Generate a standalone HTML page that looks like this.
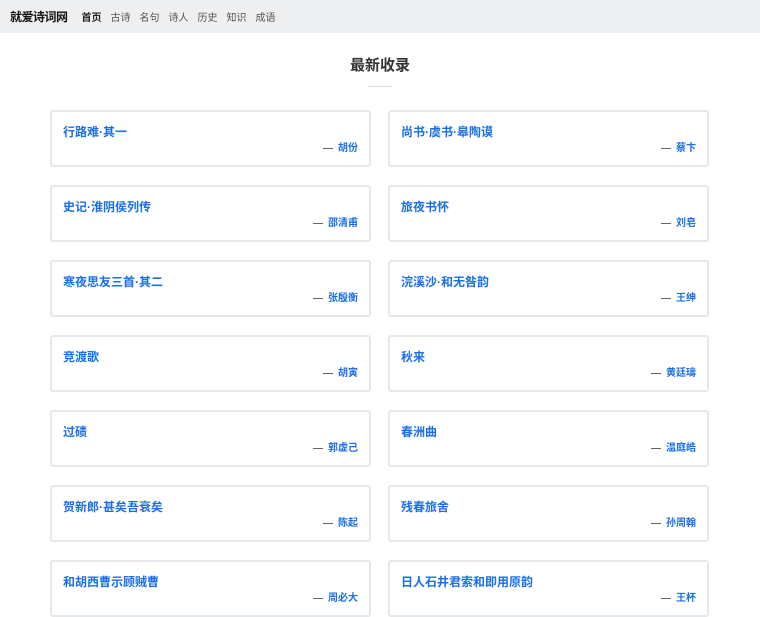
<!DOCTYPE html>
<html><head><meta charset="utf-8"><style>
*{margin:0;padding:0;box-sizing:border-box}
body{width:760px;height:600px;overflow:hidden;background:#fff;font-family:"Liberation Sans","Noto Sans CJK SC",sans-serif}
.nav{height:33px;background:#eeeff1;display:flex;align-items:center;padding-left:10px}
.logo{font-size:12px;font-weight:bold;color:#111;margin-right:14px;letter-spacing:-0.5px}
.nav a{font-size:10px;color:#555;margin-right:9px;text-decoration:none}
.nav a.on{color:#222;font-weight:bold}
h2{text-align:center;font-size:15px;color:#333;margin-top:24px;font-weight:bold;line-height:18px}
.line{width:24px;height:1px;background:#ddd;margin:11px auto 0}
.card{position:absolute;width:321px;height:57px;border:2px solid #e6e7e9;border-radius:3px}
.card .t{position:absolute;left:11px;top:12px;font-size:12px;font-weight:bold;color:#1a6fe6;line-height:17px}
.card .a{position:absolute;right:11px;top:30px;font-size:10px;font-weight:bold;color:#1a6fe6;line-height:14px}
.card .a span{color:#666;margin-right:5px}
</style></head><body>
<div class="nav"><span class="logo">就爱诗词网</span><a class="on">首页</a><a>古诗</a><a>名句</a><a>诗人</a><a>历史</a><a>知识</a><a>成语</a></div>
<h2>最新收录</h2><div class="line"></div>
<div class="card" style="left:50px;top:110px"><div class="t">行路难·其一</div><div class="a"><span>—</span>胡份</div></div>
<div class="card" style="left:388px;top:110px"><div class="t">尚书·虞书·皋陶谟</div><div class="a"><span>—</span>蔡卞</div></div>
<div class="card" style="left:50px;top:185px"><div class="t">史记·淮阴侯列传</div><div class="a"><span>—</span>邵清甫</div></div>
<div class="card" style="left:388px;top:185px"><div class="t">旅夜书怀</div><div class="a"><span>—</span>刘皂</div></div>
<div class="card" style="left:50px;top:260px"><div class="t">寒夜思友三首·其二</div><div class="a"><span>—</span>张殷衡</div></div>
<div class="card" style="left:388px;top:260px"><div class="t">浣溪沙·和无咎韵</div><div class="a"><span>—</span>王绅</div></div>
<div class="card" style="left:50px;top:335px"><div class="t">竞渡歌</div><div class="a"><span>—</span>胡寅</div></div>
<div class="card" style="left:388px;top:335px"><div class="t">秋来</div><div class="a"><span>—</span>黄廷璹</div></div>
<div class="card" style="left:50px;top:410px"><div class="t">过碛</div><div class="a"><span>—</span>郭虚己</div></div>
<div class="card" style="left:388px;top:410px"><div class="t">春洲曲</div><div class="a"><span>—</span>温庭皓</div></div>
<div class="card" style="left:50px;top:485px"><div class="t">贺新郎·甚矣吾衰矣</div><div class="a"><span>—</span>陈起</div></div>
<div class="card" style="left:388px;top:485px"><div class="t">残春旅舍</div><div class="a"><span>—</span>孙周翰</div></div>
<div class="card" style="left:50px;top:560px"><div class="t">和胡西曹示顾贼曹</div><div class="a"><span>—</span>周必大</div></div>
<div class="card" style="left:388px;top:560px"><div class="t">日人石井君索和即用原韵</div><div class="a"><span>—</span>王杯</div></div>
</body></html>
